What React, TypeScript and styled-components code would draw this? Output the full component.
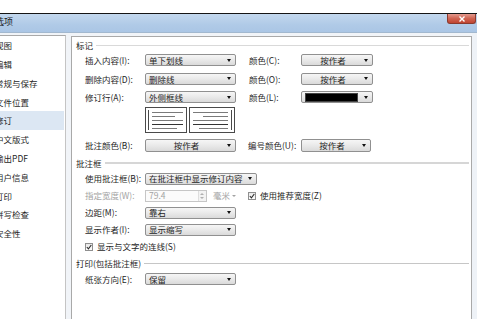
import React from 'react';
import styled, { createGlobalStyle } from 'styled-components';

const FONT = `"Noto Sans CJK SC", "Noto Sans", sans-serif`;

const Global = createGlobalStyle`
  html, body { margin: 0; padding: 0; background: #fff; overflow: hidden; }
  #root { width: 477px; height: 319px; overflow: hidden; }
  * { box-sizing: border-box; }
`;

const Page = styled.div`
  width: 477px;
  height: 319px;
  overflow: hidden;
  display: flex;
  flex-direction: column;
  background: #fff;
  font-family: ${FONT};
  font-size: 8.5px;
  line-height: 1;
  color: #1f1f1f;
`;

const TopGap = styled.div`
  height: 13px;
  flex: none;
  background: #fff;
`;

const Window = styled.div`
  flex: 1;
  min-height: 0;
  display: flex;
  flex-direction: column;
  border-top: 1px solid #151515;
  background: #f1f4f8;
`;

const TitleBar = styled.div`
  height: 19px;
  flex: none;
  display: flex;
  justify-content: space-between;
  align-items: flex-start;
  background: linear-gradient(#c3d8ee, #b0cae7 60%, #aac6e5);
  border-bottom: 1px solid #a2b8cf;
`;

const Title = styled.span`
  margin-left: -5px;
  padding-top: 3px;
  font-size: 9px;
  color: #1a1a1a;
`;

const CloseButton = styled.div`
  width: 29px;
  height: 10px;
  margin-right: 1px;
  display: flex;
  align-items: center;
  justify-content: center;
  background: linear-gradient(#e49a8e, #d06452 50%, #c04431);
  border: 1px solid #8a3a2e;
  border-top: none;
  border-radius: 0 0 3px 3px;
`;

const Body = styled.div`
  flex: 1;
  min-height: 0;
  display: flex;
  align-items: flex-start;
`;

const NavList = styled.ul`
  list-style: none;
  margin: 2px 0 0;
  padding: 0;
  width: 66px;
  height: 300px;
  flex: none;
  background: #fff;
  border-top: 1px solid #a9a9a9;
  border-right: 1px solid #c4c4c4;
`;

const NavItem = styled.li<{ $active?: boolean }>`
  height: 18.8px;
  display: flex;
  align-items: center;
  margin-right: 1px;
  white-space: nowrap;
  background: ${(p) => (p.$active ? '#dce7f3' : 'transparent')};
`;

const NavLabel = styled.span`
  margin-left: -5px;
`;

const Panel = styled.div`
  margin: 3px 0 0 5px;
  width: 401px;
  height: 300px;
  flex: none;
  background: #fff;
  border: 1px solid #a9a9a9;
  border-bottom: none;
  padding: 2px 2px 0 4px;
`;

const SideFrame = styled.div`
  flex: 1;
  align-self: stretch;
  background: #eef2f7;
`;

const SectionHead = styled.div<{ $h: number; $mt?: number; $line: string }>`
  display: flex;
  align-items: center;
  gap: 3px;
  height: ${(p) => p.$h}px;
  margin-top: ${(p) => p.$mt ?? 0}px;
  white-space: nowrap;
  &::after {
    content: '';
    flex: 1;
    border-top: ${(p) => p.$line};
  }
`;

const Row = styled.div<{ $h: number; $mt?: number }>`
  display: grid;
  grid-template-columns: 60px 91px 65px 72px;
  align-items: center;
  height: ${(p) => p.$h}px;
  margin-top: ${(p) => p.$mt ?? 0}px;
  padding-left: 9px;
`;

const Label = styled.span<{ $disabled?: boolean; $indent?: number }>`
  white-space: nowrap;
  padding-left: ${(p) => p.$indent ?? 0}px;
  color: ${(p) => (p.$disabled ? '#a3a3a3' : '#1f1f1f')};
`;

const Select = styled.div<{ $w?: number; $h?: number; $span?: number }>`
  width: ${(p) => (p.$w ? `${p.$w}px` : '100%')};
  height: ${(p) => p.$h ?? 12}px;
  grid-column: ${(p) => (p.$span ? `span ${p.$span}` : 'auto')};
  display: flex;
  align-items: center;
  padding-left: 3px;
  border: 1px solid #909090;
  border-radius: 2px;
  background: linear-gradient(#f6f6f6, #e9e9e9 50%, #dadada);
  white-space: nowrap;
  overflow: hidden;
`;

const SelectText = styled.span<{ $center?: boolean }>`
  flex: 1;
  text-align: ${(p) => (p.$center ? 'center' : 'left')};
`;

const Arrow = styled.span`
  flex: none;
  width: 0;
  height: 0;
  margin: 0 4px 0 3px;
  border-left: 2.5px solid transparent;
  border-right: 2.5px solid transparent;
  border-top: 3px solid #111;
`;

const Swatch = styled.span`
  flex: 1;
  height: 9px;
  margin-right: 3px;
  background: #000;
  border: 1px solid #444;
`;

const SpinGroup = styled.div`
  display: flex;
  align-items: center;
  white-space: nowrap;
`;

const Spin = styled.div`
  width: 62px;
  height: 12px;
  display: flex;
  align-items: center;
  border: 1px solid #c6c6c6;
  background: #fbfbfb;
  color: #a3a3a3;
`;

const SpinValue = styled.span`
  flex: 1;
  padding-left: 3px;
`;

const SpinButtons = styled.div`
  width: 8px;
  height: 100%;
  display: flex;
  flex-direction: column;
  align-items: center;
  justify-content: space-evenly;
  border-left: 1px solid #dedede;
  background: #f3f3f3;
`;

const SpinArrow = styled.span<{ $up?: boolean }>`
  width: 0;
  height: 0;
  border-left: 2px solid transparent;
  border-right: 2px solid transparent;
  ${(p) => (p.$up ? 'border-bottom: 2px solid #b0b0b0;' : 'border-top: 2px solid #b0b0b0;')}
`;

const Unit = styled.span`
  margin-left: 6px;
  color: #a3a3a3;
  display: flex;
  align-items: center;
  gap: 2px;
`;

const SmallArrow = styled.span`
  width: 0;
  height: 0;
  border-left: 2px solid transparent;
  border-right: 2px solid transparent;
  border-top: 2px solid #a3a3a3;
`;

const CheckLine = styled.label<{ $full?: boolean }>`
  display: flex;
  align-items: center;
  gap: 4px;
  white-space: nowrap;
  grid-column: ${(p) => (p.$full ? '1 / -1' : '3 / -1')};
  margin-left: ${(p) => (p.$full ? 0 : 12)}px;
`;

const CheckBox = styled.span`
  width: 8px;
  height: 8px;
  flex: none;
  display: flex;
  align-items: center;
  justify-content: center;
  border: 1px solid #8f8f8f;
  background: linear-gradient(#e9e9e9, #fdfdfd);
`;

const PreviewCell = styled.div`
  grid-column: 2;
  display: flex;
  gap: 2px;
  height: 26px;
`;

const Check = () => (
  <CheckBox>
    <svg width="6" height="6" viewBox="0 0 6 6">
      <polyline points="0.8,3 2.4,4.8 5.3,1" fill="none" stroke="#2b2b2b" strokeWidth="1.1" />
    </svg>
  </CheckBox>
);

const PreviewLeft = () => (
  <svg width="42" height="26" viewBox="0 0 42 26">
    <rect x="0.5" y="0.5" width="41" height="25" fill="#fff" stroke="#4a4a4a" />
    <line x1="3.5" y1="3" x2="3.5" y2="23" stroke="#4a4a4a" />
    <line x1="7" y1="5.5" x2="38" y2="5.5" stroke="#7a7a7a" />
    <line x1="7" y1="9.5" x2="30" y2="9.5" stroke="#7a7a7a" />
    <line x1="7" y1="13.5" x2="38" y2="13.5" stroke="#7a7a7a" />
    <line x1="7" y1="17.5" x2="38" y2="17.5" stroke="#333" />
    <line x1="7" y1="21.5" x2="32" y2="21.5" stroke="#7a7a7a" />
  </svg>
);

const PreviewRight = () => (
  <svg width="46" height="26" viewBox="0 0 46 26">
    <rect x="0.5" y="0.5" width="45" height="25" fill="#fff" stroke="#4a4a4a" />
    <line x1="42.5" y1="3" x2="42.5" y2="23" stroke="#4a4a4a" />
    <line x1="4" y1="5.5" x2="39" y2="5.5" stroke="#7a7a7a" />
    <line x1="14" y1="9.5" x2="39" y2="9.5" stroke="#7a7a7a" />
    <line x1="4" y1="13.5" x2="39" y2="13.5" stroke="#7a7a7a" />
    <line x1="4" y1="17.5" x2="39" y2="17.5" stroke="#333" />
    <line x1="10" y1="21.5" x2="39" y2="21.5" stroke="#7a7a7a" />
  </svg>
);

const navItems = ['视图', '编辑', '常规与保存', '文件位置', '修订', '中文版式', '输出PDF', '用户信息', '打印', '拼写检查', '安全性'];

type SelProps = { text?: string; w?: number; h?: number; center?: boolean; span?: number; swatch?: boolean };
const Dropdown = ({ text, w, h, center, span, swatch }: SelProps) => (
  <Select $w={w} $h={h} $span={span}>
    {swatch ? <Swatch /> : <SelectText $center={center}>{text}</SelectText>}
    <Arrow />
  </Select>
);

export default function App() {
  return (
    <>
      <Global />
      <Page>
        <TopGap />
        <Window>
          <TitleBar>
            <Title>选项</Title>
            <CloseButton>
              <svg width="8" height="6" viewBox="0 0 8 6">
                <path d="M1.5 0.5 L6.5 5.5 M6.5 0.5 L1.5 5.5" stroke="#fff" strokeWidth="1.4" />
              </svg>
            </CloseButton>
          </TitleBar>
          <Body>
            <NavList>
              {navItems.map((n) => (
                <NavItem key={n} $active={n === '修订'}>
                  <NavLabel>{n}</NavLabel>
                </NavItem>
              ))}
            </NavList>
            <Panel>
              <SectionHead $h={12} $line="1px solid #d9d9d9">标记</SectionHead>
              <Row $h={18.5}>
                <Label>插入内容(I):</Label>
                <Dropdown text="单下划线" />
                <Label $indent={13}>颜色(C):</Label>
                <Dropdown text="按作者" center />
              </Row>
              <Row $h={18.5}>
                <Label>删除内容(D):</Label>
                <Dropdown text="删除线" />
                <Label $indent={13}>颜色(O):</Label>
                <Dropdown text="按作者" center />
              </Row>
              <Row $h={18.5}>
                <Label>修订行(A):</Label>
                <Dropdown text="外侧框线" />
                <Label $indent={13}>颜色(L):</Label>
                <Dropdown swatch />
              </Row>
              <Row $h={26} $mt={0.5}>
                <PreviewCell>
                  <PreviewLeft />
                  <PreviewRight />
                </PreviewCell>
              </Row>
              <Row $h={18} $mt={3}>
                <Label>批注颜色(B):</Label>
                <Dropdown text="按作者" center h={13} />
                <Label $indent={12}>编号颜色(U):</Label>
                <Dropdown text="按作者" center h={13} w={70} />
              </Row>
              <SectionHead $h={14} $mt={2} $line="2px solid #d6d6d6">批注框</SectionHead>
              <Row $h={17}>
                <Label>使用批注框(B):</Label>
                <Dropdown text="在批注框中显示修订内容" w={112} span={2} />
              </Row>
              <Row $h={17}>
                <Label $disabled>指定宽度(W):</Label>
                <SpinGroup>
                  <Spin>
                    <SpinValue>79.4</SpinValue>
                    <SpinButtons>
                      <SpinArrow $up />
                      <SpinArrow />
                    </SpinButtons>
                  </Spin>
                  <Unit>
                    毫米
                    <SmallArrow />
                  </Unit>
                </SpinGroup>
                <CheckLine>
                  <Check />
                  使用推荐宽度(Z)
                </CheckLine>
              </Row>
              <Row $h={17}>
                <Label>边距(M):</Label>
                <Dropdown text="靠右" />
              </Row>
              <Row $h={17}>
                <Label>显示作者(I):</Label>
                <Dropdown text="显示缩写" />
              </Row>
              <Row $h={17}>
                <CheckLine $full>
                  <Check />
                  显示与文字的连线(S)
                </CheckLine>
              </Row>
              <SectionHead $h={14} $mt={1} $line="1px solid #c6c6c6">打印(包括批注框)</SectionHead>
              <Row $h={18}>
                <Label>纸张方向(E):</Label>
                <Dropdown text="保留" />
              </Row>
            </Panel>
            <SideFrame />
          </Body>
        </Window>
      </Page>
    </>
  );
}
